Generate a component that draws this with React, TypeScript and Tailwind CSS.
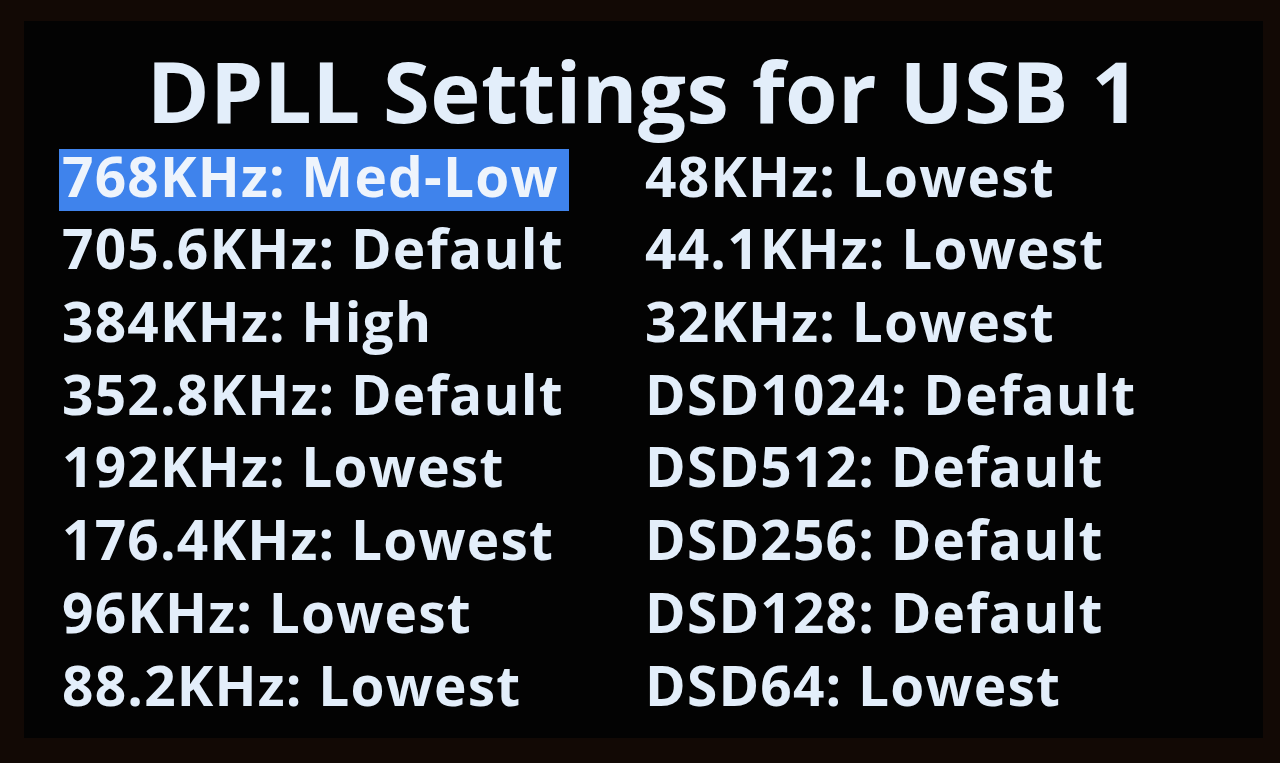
const left = [
  '768KHz: Med-Low',
  '705.6KHz: Default',
  '384KHz: High',
  '352.8KHz: Default',
  '192KHz: Lowest',
  '176.4KHz: Lowest',
  '96KHz: Lowest',
  '88.2KHz: Lowest',
]

const right = [
  '48KHz: Lowest',
  '44.1KHz: Lowest',
  '32KHz: Lowest',
  'DSD1024: Default',
  'DSD512: Default',
  'DSD256: Default',
  'DSD128: Default',
  'DSD64: Lowest',
]

function Row({ label, selected }: { label: string; selected?: boolean }) {
  return (
    <div className="h-[72.7px] flex items-end">
      <span
        className={
          'block h-[62px] leading-[53px] pb-[9px] pl-[3px] whitespace-nowrap tracking-[1.2px] ' +
          (selected ? 'bg-[#3f83ec] text-[#eef4fc] pr-[10px]' : 'text-[#e3eefa] pr-[3px]')
        }
      >
        {label}
      </span>
    </div>
  )
}

export default function App() {
  return (
    <div className="w-[1280px] h-[763px] bg-[#120905] pt-[21px] pl-[24px] pr-[17px] pb-[25px]">
      <div
        className="w-full h-full bg-[#030303] pt-[29px] pl-[35px] font-bold text-[55px]"
        style={{ fontFamily: '"Open Sans", "DejaVu Sans", sans-serif' }}
      >
        <h1 className="h-[80px] leading-[80px] text-[85px] tracking-[0.4px] text-center text-[#e3eefa] pr-[35px] whitespace-nowrap">
          DPLL Settings for USB 1
        </h1>
        <div className="flex mt-[8px]">
          <div className="w-[583px]">
            {left.map((l, i) => (
              <Row key={l} label={l} selected={i === 0} />
            ))}
          </div>
          <div>
            {right.map((r) => (
              <Row key={r} label={r} />
            ))}
          </div>
        </div>
      </div>
    </div>
  )
}
